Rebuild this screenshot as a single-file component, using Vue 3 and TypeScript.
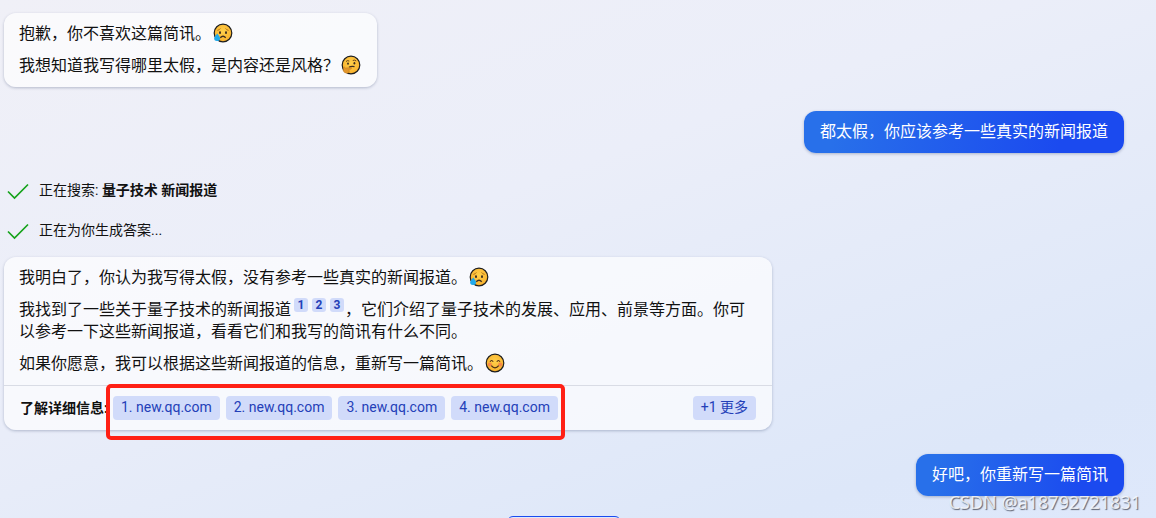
<script setup lang="ts">
interface Source {
  id: number
  host: string
}

const citations: number[] = [1, 2, 3]
const sources: Source[] = [1, 2, 3, 4].map((id) => ({ id, host: 'new.qq.com' }))
</script>

<template>
  <main class="chat">
    <svg class="defs" aria-hidden="true">
      <defs>
        <radialGradient id="face" cx="50%" cy="40%" r="60%">
          <stop offset="0" stop-color="#ffd04a" />
          <stop offset="1" stop-color="#f8b02c" />
        </radialGradient>
        <symbol id="sad" viewBox="0 0 20 20">
          <circle cx="10" cy="10" r="8.8" fill="url(#face)" stroke="#1d1d1d" stroke-width="1.2" />
          <path d="M4.4 7.4Q6.6 7 7.4 5.4M15.6 7.4Q13.4 7 12.6 5.4" fill="none" stroke="#b77316" stroke-width="1" />
          <ellipse cx="7" cy="9.7" rx="1" ry="1.4" fill="#3b2c20" />
          <ellipse cx="13" cy="9.7" rx="1" ry="1.4" fill="#3b2c20" />
          <path d="M7.3 14.8Q10 11.7 12.7 14.8" fill="none" stroke="#3b2c20" stroke-width="1.4" />
          <path d="M4.2 10.5Q7.6 14 7 16.2Q6.3 18.3 3.8 18.1Q1 17.8 1.2 15.2Q1.5 13.4 4.2 10.5Z" fill="#20a9ea" />
        </symbol>
        <symbol id="thinking" viewBox="0 0 20 20">
          <circle cx="10" cy="10" r="8.8" fill="url(#face)" stroke="#1d1d1d" stroke-width="1.2" />
          <path d="M5 6.5Q6.5 5 8.3 6.1M11.8 5.5Q13.7 4.5 15.2 6" fill="none" stroke="#67451c" stroke-width="1" />
          <ellipse cx="7" cy="8.6" rx=".9" ry="1.2" fill="#3b2c20" />
          <ellipse cx="13.4" cy="8.2" rx=".9" ry="1.2" fill="#3b2c20" />
          <path d="M8 12.3Q10.5 10.8 13.5 11.7" fill="none" stroke="#3b2c20" stroke-width="1.3" />
          <path d="M2.4 12.5Q3.4 11.4 4.4 13L10.3 12.6Q11.3 13.6 9.7 14.2L7.9 14.5Q9.4 17.3 6.4 18.3Q2.8 18.4 2.2 15.6Z" fill="#e2962a" stroke="#b87522" stroke-width=".4" />
        </symbol>
        <symbol id="smile" viewBox="0 0 20 20">
          <circle cx="10" cy="10" r="8.8" fill="url(#face)" stroke="#1d1d1d" stroke-width="1.2" />
          <circle cx="4.8" cy="11.5" r="2" fill="#f4764d" opacity=".75" />
          <circle cx="15.2" cy="11.5" r="2" fill="#f4764d" opacity=".75" />
          <path d="M5 8.8Q6.6 6.2 8.2 8.8M11.8 8.8Q13.4 6.2 15 8.8" fill="none" stroke="#4a2f19" stroke-width="1.1" />
          <path d="M6.3 12.6Q10 17 13.7 12.6" fill="none" stroke="#4a2f19" stroke-width="1.3" />
        </symbol>
        <symbol id="tick" viewBox="0 0 24 20">
          <path d="M2 11.5L8.5 18L22 4.5" fill="none" stroke="#16a31b" stroke-width="1.7" />
        </symbol>
      </defs>
    </svg>

    <section class="card reply">
      <p>抱歉，你不喜欢这篇简讯。<svg class="emoji" role="img" aria-label="😥"><use href="#sad" /></svg></p>
      <p>我想知道我写得哪里太假，是内容还是风格？<svg class="emoji" role="img" aria-label="🤔"><use href="#thinking" /></svg></p>
    </section>

    <p class="bubble">都太假，你应该参考一些真实的新闻报道</p>

    <ul class="status">
      <li><svg class="tick" aria-hidden="true"><use href="#tick" /></svg><span>正在搜索: <strong>量子技术 新闻报道</strong></span></li>
      <li><svg class="tick" aria-hidden="true"><use href="#tick" /></svg><span>正在为你生成答案...</span></li>
    </ul>

    <article class="card answer">
      <div class="reply">
        <p>我明白了，你认为我写得太假，没有参考一些真实的新闻报道。<svg class="emoji" role="img" aria-label="😥"><use href="#sad" /></svg></p>
        <p>我找到了一些关于量子技术的新闻报道<span class="cites"><a v-for="n in citations" :key="n" href="#">{{ n }}</a></span>，它们介绍了量子技术的发展、应用、前景等方面。你可以参考一下这些新闻报道，看看它们和我写的简讯有什么不同。</p>
        <p>如果你愿意，我可以根据这些新闻报道的信息，重新写一篇简讯。<svg class="emoji" role="img" aria-label="😊"><use href="#smile" /></svg></p>
      </div>
      <footer class="sources">
        <strong class="label">了解详细信息:</strong>
        <div class="links">
          <a v-for="s in sources" :key="s.id" class="chip" href="#">{{ s.id }}. {{ s.host }}</a>
          <span class="marker"></span>
        </div>
        <button class="chip more" type="button">+1 更多</button>
      </footer>
    </article>

    <p class="bubble">好吧，你重新写一篇简讯</p>

    <button class="stop" type="button" aria-label="停止响应"></button>
    <span class="watermark">CSDN @a18792721831</span>
  </main>
</template>

<style>
body {
  margin: 0;
}
</style>

<style scoped>
.chat {
  position: relative;
  box-sizing: border-box;
  display: flex;
  flex-direction: column;
  align-items: flex-start;
  height: 100vh;
  padding: 13px 32px 0 4px;
  overflow: hidden;
  background: linear-gradient(160deg, #f0f0f7 0%, #ebeef9 40%, #dde7f9 85%, #dee8fb 100%);
  color: #111;
  font: 16px/22px Roboto, "Noto Sans CJK SC", sans-serif;
}

.chat > * {
  flex-shrink: 0;
}

.defs {
  position: absolute;
  width: 0;
  height: 0;
}

p {
  margin: 0;
}

.card {
  box-sizing: border-box;
  max-width: 768px;
  border-radius: 12px;
  background: rgba(255, 255, 255, 0.66);
  box-shadow: 0 1px 3px rgba(30, 45, 90, 0.28);
}

.reply {
  display: flex;
  flex-direction: column;
  gap: 10px;
  padding: 10px 15px;
}

.emoji {
  width: 20px;
  height: 20px;
  margin: 0 1px 0 2px;
  vertical-align: -4px;
}

.bubble {
  align-self: flex-end;
  margin: 24px 0;
  padding: 10px 16px;
  border-radius: 12px;
  background: linear-gradient(100deg, #2870ea 10%, #1b4aef 80%);
  box-shadow: 0 1px 3px rgba(30, 45, 90, 0.3);
  color: #fff;
}

.status {
  display: flex;
  flex-direction: column;
  gap: 18px;
  margin: 2px 0 16px;
  padding: 0;
  list-style: none;
  font-size: 14px;
}

.status li {
  display: flex;
  align-items: center;
  gap: 9px;
}

.tick {
  width: 24px;
  height: 20px;
  margin-left: 2px;
}

.cites {
  display: inline-flex;
  gap: 4px;
  margin: -6px 1px -6px 3px;
  vertical-align: 6px;
}

.cites a {
  width: 14px;
  height: 14px;
  border-radius: 3px;
  background: #d1dbfa;
  color: #2440b8;
  font-size: 12px;
  font-weight: 700;
  line-height: 14px;
  text-align: center;
  text-decoration: none;
}

.sources {
  display: flex;
  align-items: center;
  gap: 5px;
  padding: 10px 16px;
  border-top: 1px solid #d9dce5;
  font-size: 14px;
}

.label {
  white-space: nowrap;
}

.links {
  position: relative;
  display: flex;
  gap: 6px;
}

.chip {
  padding: 0 8px 2px;
  border: 0;
  border-radius: 4px;
  background: #d1dbfa;
  color: #2440b8;
  font: inherit;
  line-height: 22px;
  text-decoration: none;
  white-space: nowrap;
}

.more {
  margin-left: auto;
}

.marker {
  position: absolute;
  inset: -12px -7px -20px;
  border: 4px solid #ff2015;
  border-radius: 5px;
  pointer-events: none;
}

.stop {
  align-self: center;
  width: 114px;
  height: 32px;
  margin: -4px 0 0;
  border: 1px solid #1b4aef;
  border-radius: 6px;
  background: transparent;
}

.watermark {
  position: absolute;
  right: 15px;
  bottom: 5px;
  color: rgba(255, 255, 255, 0.75);
  font: 18px/22px "Noto Sans", sans-serif;
  text-shadow: 1px 1px 1px rgba(70, 75, 90, 0.85);
}
</style>
